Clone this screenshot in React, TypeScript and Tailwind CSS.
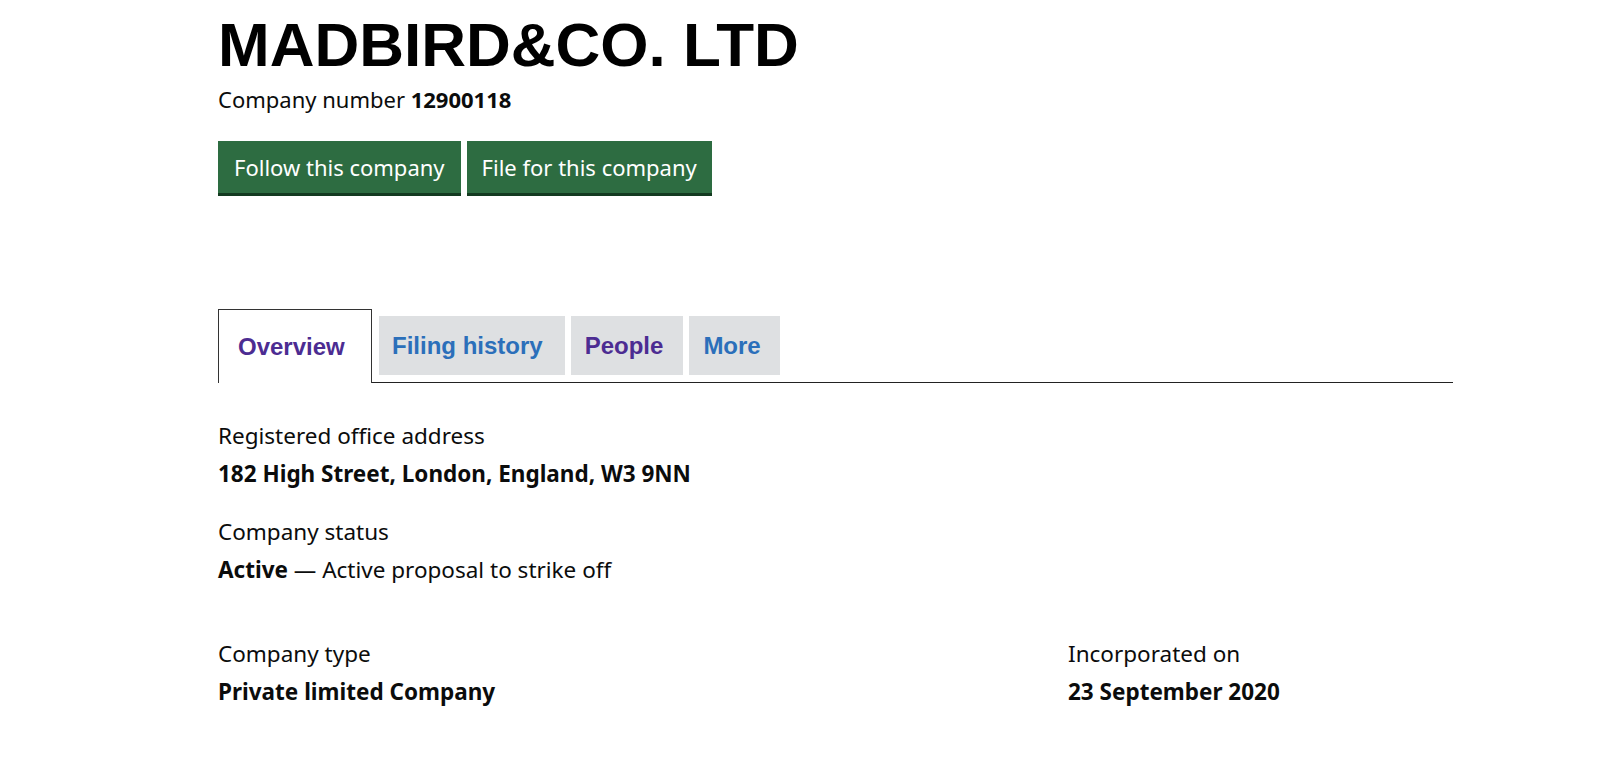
export default function App() {
  const body = "font-['Noto_Sans',sans-serif] text-[#0b0c0c]";
  return (
    <div className={`min-h-[769px] bg-white pl-[218px] pt-[14px] ${body}`}>
      <h1 className="font-['Liberation_Sans',Arial,sans-serif] text-[62px] font-bold leading-none text-black">
        MADBIRD&amp;CO. LTD
      </h1>
      <p className="mt-[8px] text-[22px] leading-[30px]">
        Company number <span className="font-bold">12900118</span>
      </p>

      <div className="mt-[27px] flex gap-[6px]">
        <button
          type="button"
          className="h-[55px] border-b-[3px] border-[#133a20] bg-[#2d6c41] px-[16px] text-[22px] leading-none text-white"
        >
          Follow this company
        </button>
        <button
          type="button"
          className="h-[55px] border-b-[3px] border-[#133a20] bg-[#2d6c41] px-[15px] text-[22px] leading-none text-white"
        >
          File for this company
        </button>
      </div>

      <div className="mt-[113px] flex w-[1235px] items-end border-b border-[#222] font-['Liberation_Sans',Arial,sans-serif] text-[24px] font-bold">
        <div className="-mb-px flex h-[74px] w-[154px] items-center border border-b-0 border-[#333] bg-white pl-[19px] text-[#4c2c92]">
          Overview
        </div>
        <div className="mb-[7px] ml-[7px] flex h-[59px] items-center bg-[#dee0e2] pl-[13px] pr-[22px] text-[#2b6fba]">
          Filing history
        </div>
        <div className="mb-[7px] ml-[6px] flex h-[59px] items-center bg-[#dee0e2] pl-[14px] pr-[20px] text-[#4c2c92]">
          People
        </div>
        <div className="mb-[7px] ml-[6px] flex h-[59px] items-center bg-[#dee0e2] pl-[14px] pr-[19px] text-[#2b6fba]">
          More
        </div>
      </div>

      <dl className="mt-[34px] text-[22.5px] leading-[38px]">
        <dt>Registered office address</dt>
        <dd className="font-bold">182 High Street, London, England, W3 9NN</dd>

        <dt className="mt-[20px]">Company status</dt>
        <dd>
          <span className="font-bold">Active</span> — Active proposal to strike off
        </dd>

        <div className="mt-[46px] grid grid-cols-[850px_1fr]">
          <div>
            <dt>Company type</dt>
            <dd className="font-bold">Private limited Company</dd>
          </div>
          <div>
            <dt>Incorporated on</dt>
            <dd className="font-bold">23 September 2020</dd>
          </div>
        </div>
      </dl>
    </div>
  );
}
